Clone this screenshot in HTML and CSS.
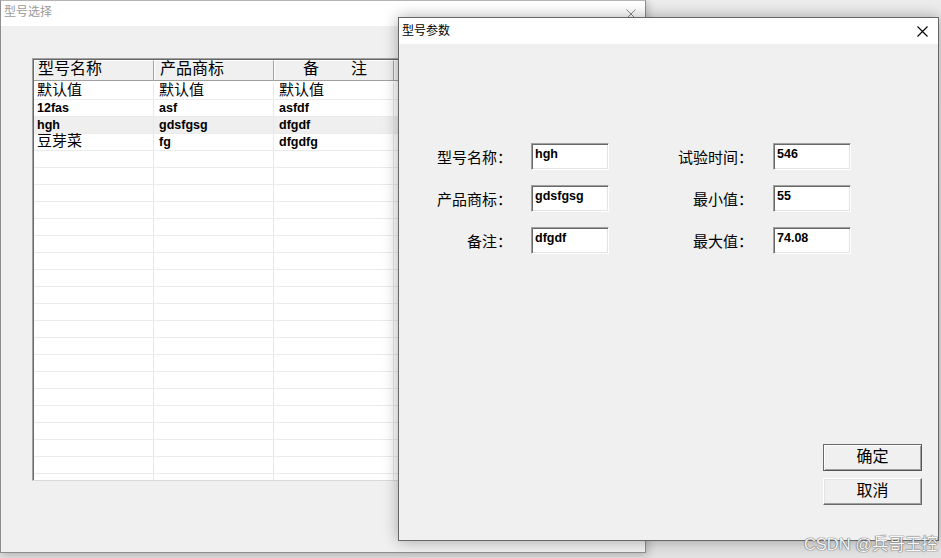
FILE: index.html
```html
<!DOCTYPE html>
<html lang="zh">
<head>
<meta charset="utf-8">
<title>型号参数</title>
<link rel="stylesheet" href="styles.css">
</head>
<body>
<div class="desktop">
  <div class="win main">
    <div class="titlebar inactive">
      <span class="title">型号选择</span>
      <svg class="close" width="10" height="10" viewBox="0 0 10 10"><path d="M0.5 0.5L9.5 9.5M9.5 0.5L0.5 9.5" stroke="#8c8c8c" stroke-width="1" fill="none"/></svg>
    </div>
    <div class="main-body">
      <div class="list">
        <div class="hdr">
          <div class="hc c1">型号名称</div>
          <div class="hc c2">产品商标</div>
          <div class="hc c3">备&emsp;&emsp;注</div>
          <div class="hc rest"></div>
        </div>
        <div class="rows">
          <div class="row"><div class="c c1 cjk">默认值</div><div class="c c2 cjk">默认值</div><div class="c c3 cjk">默认值</div><div class="c rest"></div></div>
          <div class="row"><div class="c c1">12fas</div><div class="c c2">asf</div><div class="c c3">asfdf</div><div class="c rest"></div></div>
          <div class="row sel"><div class="c c1">hgh</div><div class="c c2">gdsfgsg</div><div class="c c3">dfgdf</div><div class="c rest"></div></div>
          <div class="row"><div class="c c1 cjk">豆芽菜</div><div class="c c2">fg</div><div class="c c3">dfgdfg</div><div class="c rest"></div></div>
          <div class="row"><div class="c c1"></div><div class="c c2"></div><div class="c c3"></div><div class="c rest"></div></div>
          <div class="row"><div class="c c1"></div><div class="c c2"></div><div class="c c3"></div><div class="c rest"></div></div>
          <div class="row"><div class="c c1"></div><div class="c c2"></div><div class="c c3"></div><div class="c rest"></div></div>
          <div class="row"><div class="c c1"></div><div class="c c2"></div><div class="c c3"></div><div class="c rest"></div></div>
          <div class="row"><div class="c c1"></div><div class="c c2"></div><div class="c c3"></div><div class="c rest"></div></div>
          <div class="row"><div class="c c1"></div><div class="c c2"></div><div class="c c3"></div><div class="c rest"></div></div>
          <div class="row"><div class="c c1"></div><div class="c c2"></div><div class="c c3"></div><div class="c rest"></div></div>
          <div class="row"><div class="c c1"></div><div class="c c2"></div><div class="c c3"></div><div class="c rest"></div></div>
          <div class="row"><div class="c c1"></div><div class="c c2"></div><div class="c c3"></div><div class="c rest"></div></div>
          <div class="row"><div class="c c1"></div><div class="c c2"></div><div class="c c3"></div><div class="c rest"></div></div>
          <div class="row"><div class="c c1"></div><div class="c c2"></div><div class="c c3"></div><div class="c rest"></div></div>
          <div class="row"><div class="c c1"></div><div class="c c2"></div><div class="c c3"></div><div class="c rest"></div></div>
          <div class="row"><div class="c c1"></div><div class="c c2"></div><div class="c c3"></div><div class="c rest"></div></div>
          <div class="row"><div class="c c1"></div><div class="c c2"></div><div class="c c3"></div><div class="c rest"></div></div>
          <div class="row"><div class="c c1"></div><div class="c c2"></div><div class="c c3"></div><div class="c rest"></div></div>
          <div class="row"><div class="c c1"></div><div class="c c2"></div><div class="c c3"></div><div class="c rest"></div></div>
          <div class="row"><div class="c c1"></div><div class="c c2"></div><div class="c c3"></div><div class="c rest"></div></div>
          <div class="row"><div class="c c1"></div><div class="c c2"></div><div class="c c3"></div><div class="c rest"></div></div>
          <div class="row"><div class="c c1"></div><div class="c c2"></div><div class="c c3"></div><div class="c rest"></div></div>
          <div class="row"><div class="c c1"></div><div class="c c2"></div><div class="c c3"></div><div class="c rest"></div></div>
        </div>
      </div>
    </div>
  </div>

  <div class="win dlg">
    <div class="titlebar">
      <span class="title dark">型号参数</span>
      <svg class="close dclose" width="11" height="11" viewBox="0 0 11 11"><path d="M0.5 0.5L10.5 10.5M10.5 0.5L0.5 10.5" stroke="#000" stroke-width="1.1" fill="none"/></svg>
    </div>
    <div class="dlg-body">
      <div class="form">
        <div class="field left"><span class="lbl">型号名称：</span><div class="inp">hgh</div></div>
        <div class="field right"><span class="lbl">试验时间：</span><div class="inp">546</div></div>
        <div class="field left"><span class="lbl">产品商标：</span><div class="inp">gdsfgsg</div></div>
        <div class="field right"><span class="lbl">最小值：</span><div class="inp">55</div></div>
        <div class="field left"><span class="lbl">备注：</span><div class="inp">dfgdf</div></div>
        <div class="field right"><span class="lbl">最大值：</span><div class="inp">74.08</div></div>
      </div>
      <div class="btns">
        <div class="btn def">确定</div>
        <div class="btn">取消</div>
      </div>
    </div>
  </div>

  <div class="wm">CSDN @兵哥王控</div>
</div>
</body>
</html>
```
FILE: styles.css
```css
html, body {
  margin: 0;
  padding: 0;
}
body {
  background: #e6e6e6;
  font-family: "Liberation Sans", Arial, "Noto Sans CJK SC", sans-serif;
  overflow: hidden;
}
.desktop {
  position: relative;
  width: 941px;
  height: 558px;
  overflow: hidden;
  background: linear-gradient(#ececec, #e2e2e2);
}
.win {
  position: absolute;
  box-sizing: border-box;
  display: flex;
  flex-direction: column;
}
.main {
  left: 0;
  top: 0;
  width: 646px;
  height: 553px;
  border: 1px solid #8e8e8e;
  border-top-color: #b4b4b4;
  box-shadow: 2px 2px 8px rgba(0,0,0,0.22);
  background: #f0f0f0;
}
.titlebar {
  height: 25px;
  flex: none;
  background: #fff;
  display: flex;
  align-items: center;
  justify-content: space-between;
}
.title {
  padding-left: 3px;
  padding-bottom: 3px;
  font-family: "Liberation Sans", "Noto Sans CJK SC", sans-serif;
  font-size: 12px;
  color: #9a9a9a;
  line-height: 14px;
}
.title.dark {
  color: #000;
  padding-bottom: 1px;
}
.close {
  margin-right: 9px;
  display: block;
}
.main-body {
  flex: 1;
  background: #f0f0f0;
  padding: 32px 0 0 31px;
}
.list {
  box-sizing: border-box;
  width: 560px;
  height: 423px;
  background: #fff;
  border-top: 1px solid #a0a0a0;
  border-left: 1px solid #a0a0a0;
  border-bottom: 1px solid #d9d9d9;
  box-shadow: inset 1px 1px 0 #696969;
  padding: 1px 0 0 1px;
  overflow: hidden;
}
.hdr {
  display: flex;
  height: 21px;
  box-sizing: border-box;
  border-bottom: 1px solid #a0a0a0;
  background: #f0f0f0;
}
.hc {
  box-sizing: border-box;
  height: 20px;
  border-left: 1px solid #fff;
  border-top: 1px solid #fff;
  border-right: 1px solid #a0a0a0;
  font-family: "Liberation Sans", "Noto Sans CJK SC", sans-serif;
  font-size: 16px;
  line-height: 16px;
  color: #000;
  white-space: nowrap;
}
.hc.c1 { width: 120px; padding-left: 3px; }
.hc.c2 { width: 120px; padding-left: 5px; }
.hc.c3 { width: 120px; padding-left: 28px; }
.hc.rest { flex: 1; border-right: none; }
.rows {
  padding-top: 2px;
}
.row {
  display: flex;
  height: 17px;
  box-sizing: border-box;
  border-bottom: 1px solid #ebebeb;
}
.row.sel {
  background: #efefef;
}
.c {
  box-sizing: border-box;
  height: 16px;
  border-right: 1px solid #e8e8e8;
  font-weight: bold;
  font-size: 12.5px;
  line-height: 16px;
  color: #000;
  white-space: nowrap;
}
.c.cjk {
  font-family: "Liberation Sans", "Noto Sans CJK SC", sans-serif;
  font-weight: normal;
  font-size: 15px;
  line-height: 14px;
}
.c.c1 { width: 120px; padding-left: 3px; }
.c.c2 { width: 120px; padding-left: 5px; }
.c.c3 { width: 120px; padding-left: 5px; }
.c.rest { flex: 1; border-right: none; }

.dlg {
  left: 398px;
  top: 17px;
  width: 541px;
  height: 524px;
  border: 1px solid #666;
  background: #f0f0f0;
  box-shadow: 0 0 14px rgba(0,0,0,0.32);
}
.dlg .titlebar {
  height: 26px;
}
.dclose {
  margin-right: 10px;
}
.dlg-body {
  flex: 1;
  display: flex;
  flex-direction: column;
  padding: 99px 16px 35px 13px;
}
.form {
  display: grid;
  grid-template-columns: 197px 198px;
  column-gap: 44px;
  row-gap: 15px;
}
.field {
  display: flex;
  align-items: center;
  height: 27px;
}
.lbl {
  width: 100px;
  text-align: right;
  font-family: "Liberation Sans", "Noto Sans CJK SC", sans-serif;
  font-size: 15px;
  line-height: 18px;
  color: #000;
  padding-top: 2px;
}
.field.left .lbl { margin-right: 19px; }
.field.right .lbl { margin-right: 20px; }
.inp {
  box-sizing: border-box;
  width: 78px;
  height: 27px;
  background: #fff;
  border: 1px solid;
  border-color: #a0a0a0 #fff #fff #a0a0a0;
  box-shadow: inset 1px 1px 0 #696969, inset -1px -1px 0 #e3e3e3;
  padding: 3px 0 0 3px;
  font-weight: bold;
  font-size: 12.5px;
  line-height: 15px;
  color: #000;
}
.btns {
  margin-top: auto;
  display: flex;
  flex-direction: column;
  align-items: flex-end;
  gap: 7px;
}
.btn {
  box-sizing: border-box;
  width: 99px;
  height: 27px;
  background: #f0f0f0;
  border: 1px solid;
  border-color: #fff #696969 #696969 #fff;
  box-shadow: inset -1px -1px 0 #a0a0a0, inset 1px 1px 0 #e3e3e3;
  font-family: "Liberation Sans", "Noto Sans CJK SC", sans-serif;
  font-size: 16px;
  line-height: 24px;
  text-align: center;
  color: #000;
}
.btn.def {
  border-color: #696969 #555 #555 #696969;
  box-shadow: inset 1px 1px 0 #fff, inset -1px -1px 0 #a0a0a0;
}
.wm {
  position: absolute;
  right: 3px;
  bottom: 4px;
  font-family: "Liberation Sans", Arial, "Noto Sans CJK SC", sans-serif;
  font-size: 16.5px;
  line-height: 20px;
  color: rgba(255,255,255,0.95);
  text-shadow: 0 0 1px #6e6e6e, 0 0 1px #6e6e6e, 0 0 1px #6e6e6e;
  white-space: nowrap;
}
```
